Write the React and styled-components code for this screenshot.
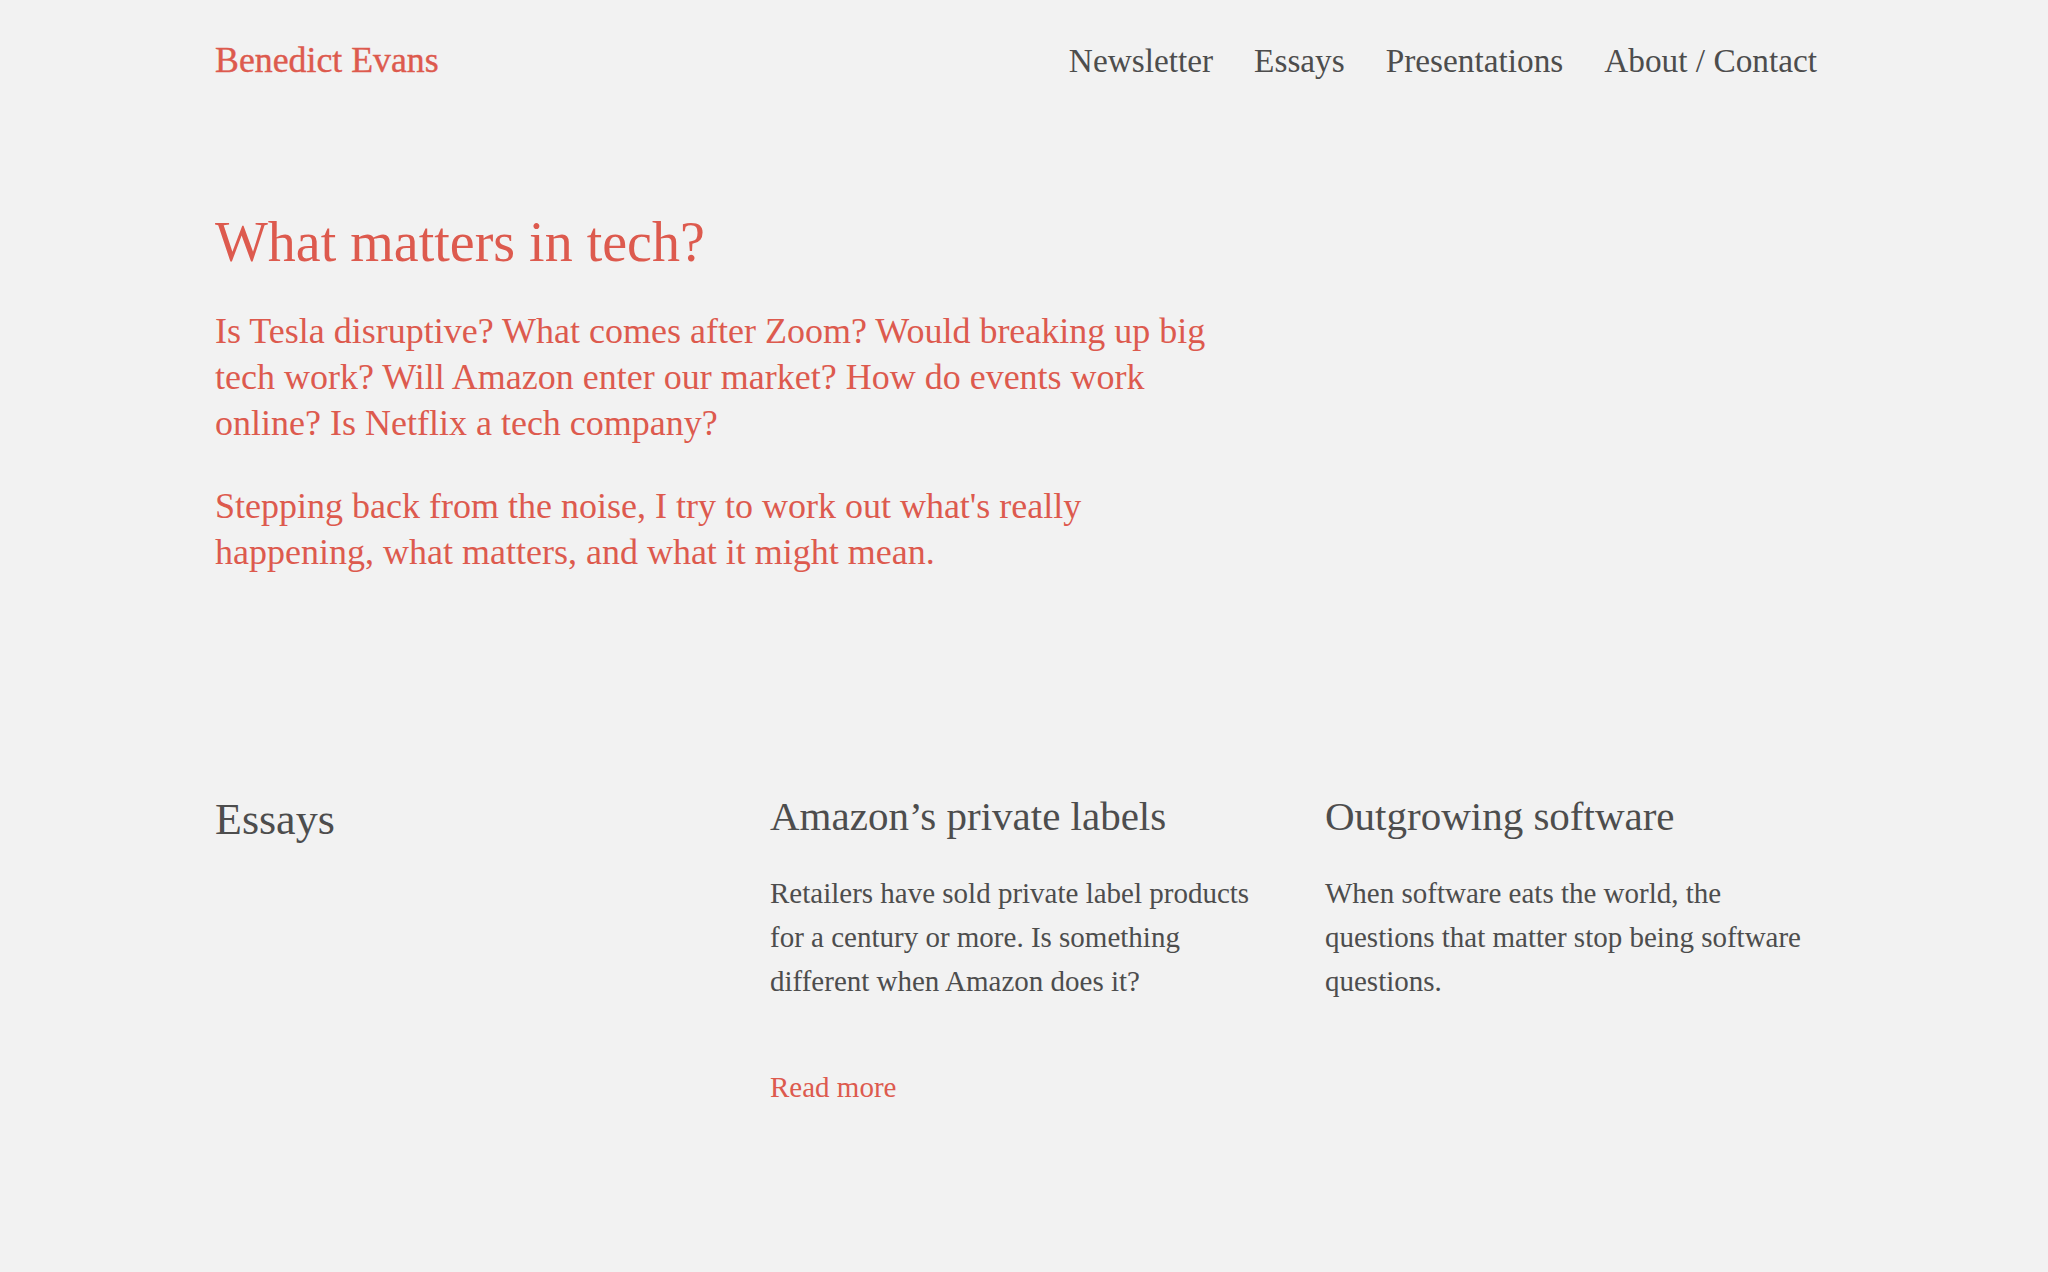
import React from "react";
import styled, { createGlobalStyle } from "styled-components";

const RED = "#dd5a4e";
const GRAY = "#4d4d4d";

const Global = createGlobalStyle`
  html, body {
    margin: 0;
    padding: 0;
    background: #f2f2f2;
  }
  body {
    font-family: "Liberation Serif", "Times New Roman", serif;
    color: ${GRAY};
    -webkit-font-smoothing: antialiased;
  }
  * { box-sizing: border-box; }
`;

const Page = styled.div`
  width: 1602px;
  margin-left: 215px;
  padding-bottom: 120px;
`;

const Header = styled.header`
  display: flex;
  justify-content: space-between;
  align-items: baseline;
  padding-top: 40px;
`;

const Logo = styled.a`
  font-size: 35.8px;
  line-height: 40px;
  color: ${RED};
  text-decoration: none;
  -webkit-text-stroke: 0.4px ${RED};
`;

const Nav = styled.nav`
  display: flex;
  gap: 41px;
  align-items: baseline;
`;

const NavLink = styled.a`
  font-size: 33.3px;
  line-height: 40px;
  color: ${GRAY};
  text-decoration: none;
`;

const Hero = styled.section`
  margin-top: 129px;
  width: 1010px;
  color: ${RED};
`;

const Title = styled.h1`
  margin: 0;
  font-size: 56px;
  line-height: 64px;
  font-weight: 400;
`;

const Lead = styled.p`
  margin: 0;
  font-size: 36px;
  line-height: 46px;
  & + & { margin-top: 37px; }
  &:first-of-type { margin-top: 34px; }
`;

const Essays = styled.section`
  margin-top: 219px;
  display: grid;
  grid-template-columns: repeat(3, 502px);
  column-gap: 53px;
  align-items: start;
`;

const SectionTitle = styled.h2`
  margin: 0;
  font-size: 44px;
  line-height: 52px;
  font-weight: 400;
  color: ${GRAY};
`;

const Card = styled.article`
  display: flex;
  flex-direction: column;
  align-items: flex-start;
`;

const CardTitle = styled.h3`
  margin: 0;
  font-size: 41px;
  line-height: 44px;
  font-weight: 400;
  color: ${GRAY};
`;

const CardText = styled.p`
  margin: 33px 0 0;
  font-size: 29px;
  line-height: 44px;
  color: ${GRAY};
`;

const ReadMore = styled.a`
  margin-top: 62px;
  font-size: 29px;
  line-height: 44px;
  color: ${RED};
  text-decoration: none;
`;

const essays = [
  {
    title: "Amazon’s private labels",
    text: "Retailers have sold private label products for a century or more. Is something different when Amazon does it?",
    more: true,
  },
  {
    title: "Outgrowing software",
    text: "When software eats the world, the questions that matter stop being software questions.",
    more: false,
  },
];

export default function App() {
  return (
    <>
      <Global />
      <Page>
        <Header>
          <Logo href="#">Benedict Evans</Logo>
          <Nav>
            <NavLink href="#">Newsletter</NavLink>
            <NavLink href="#">Essays</NavLink>
            <NavLink href="#">Presentations</NavLink>
            <NavLink href="#">About / Contact</NavLink>
          </Nav>
        </Header>

        <Hero>
          <Title>What matters in tech?</Title>
          <Lead>
            Is Tesla disruptive? What comes after Zoom? Would breaking up big
            tech work? Will Amazon enter our market? How do events work
            online? Is Netflix a tech company?
          </Lead>
          <Lead>
            Stepping back from the noise, I try to work out what's really
            happening, what matters, and what it might mean.
          </Lead>
        </Hero>

        <Essays>
          <SectionTitle>Essays</SectionTitle>
          {essays.map((e) => (
            <Card key={e.title}>
              <CardTitle>{e.title}</CardTitle>
              <CardText>{e.text}</CardText>
              {e.more && <ReadMore href="#">Read more</ReadMore>}
            </Card>
          ))}
        </Essays>
      </Page>
    </>
  );
}
